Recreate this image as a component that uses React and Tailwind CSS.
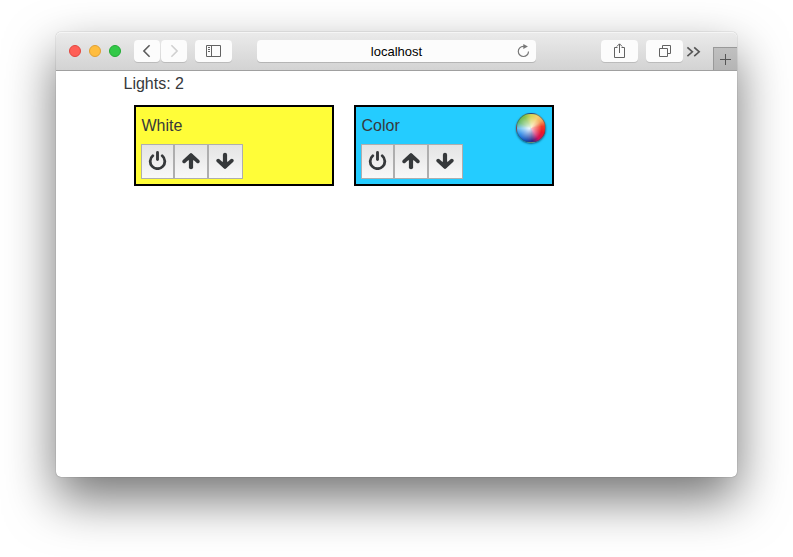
const ICON = '#36393b';

function PowerIcon() {
  return (
    <svg width="19" height="20" viewBox="0 0 19 20" fill="none" stroke={ICON} strokeLinecap="round" className="relative -top-[1.5px] -left-[0.5px] shrink-0">
      <path d="M4.8 5.8A7.3 7.3 0 1 0 14.2 5.8" strokeWidth="2.8" />
      <path d="M9.5 2.4V9.6" strokeWidth="2.9" />
    </svg>
  );
}

function ArrowIcon({ down }) {
  return (
    <svg width="18" height="18" viewBox="0 0 18 18" fill={ICON} stroke={ICON} strokeLinecap="round" strokeLinejoin="round" className={down ? 'relative -top-px -left-px rotate-180' : 'relative -top-px'}>
      <path d="M2.2 9.4L9 3L15.8 9.4" strokeWidth="3.7" fill="none" />
      <path d="M9 2.8L5 7.4H13Z" strokeWidth="1.6" />
      <path d="M9 4V15.2" strokeWidth="4.2" />
    </svg>
  );
}

function ColorWheel() {
  return (
    <div className="relative mt-1.5 mr-1.5 size-[30px] shrink-0 overflow-hidden rounded-full border border-[#2a5560]/60 bg-[conic-gradient(from_0deg,#d4d458,#f4d070_30deg,#f4a860_55deg,#f03c28_82deg,#ec1828_110deg,#d0105c_145deg,#302888_175deg,#1448b0_200deg,#1a80e8_240deg,#58b8ec_268deg,#60b868_295deg,#80c04c_330deg,#d4d458)] shadow-[0_1px_2px_rgba(0,30,60,0.6)]">
      <div className="absolute inset-0 rounded-full bg-[radial-gradient(circle_at_44%_52%,rgba(255,255,255,0.9),rgba(255,255,255,0.5)_24%,rgba(255,255,255,0)_58%)]" />
    </div>
  );
}

function Light({ name, className, picker }) {
  return (
    <section className={`flex h-[81px] w-[200px] justify-between border-2 border-black ${className}`}>
      <div className="pl-[5px]">
        <h2 className="mt-[7px] h-[30px] pl-[0.5px] text-base leading-6">{name}</h2>
        <div className="flex h-[35px]">
          <button className="flex w-[33px] items-center justify-center border border-[#aeaeae] bg-linear-to-b from-[#e4e4e4] to-[#f8f8f8]"><PowerIcon /></button>
          <button className="flex w-[34px] items-center justify-center border border-[#aeaeae] bg-linear-to-b from-[#e4e4e4] to-[#f8f8f8]"><ArrowIcon /></button>
          <button className="flex w-[35px] items-center justify-center border border-[#aeaeae] bg-linear-to-b from-[#e4e4e4] to-[#f8f8f8]"><ArrowIcon down /></button>
        </div>
      </div>
      {picker && <ColorWheel />}
    </section>
  );
}

function ToolButton({ className, children }) {
  return (
    <button className={`flex h-[22px] items-center justify-center rounded bg-[#fcfcfc] shadow-[0_1px_0_rgba(0,0,0,0.13)] ${className}`}>
      {children}
    </button>
  );
}

function Toolbar() {
  return (
    <header className="flex h-[39px] items-start rounded-t-[5px] border-b border-[#a0a0a0] bg-linear-to-b from-[#ebebeb] to-[#d3d3d3] pt-2 pl-[13px] shadow-[inset_0_1px_0_#f5f5f5]">
      <div className="mt-[5px] flex gap-2">
        <i className="size-3 rounded-full border border-[#e2463f] bg-[#ff5f57]" />
        <i className="size-3 rounded-full border border-[#e0a033] bg-[#ffbd3f]" />
        <i className="size-3 rounded-full border border-[#22ab35] bg-[#33c948]" />
      </div>
      <ToolButton className="ml-[13px] w-[26px]">
        <svg width="26" height="22" fill="none" stroke="#5c5c5c" strokeWidth="1.6"><path d="M15.6 5.3L9.9 11L15.6 16.7" /></svg>
      </ToolButton>
      <ToolButton className="ml-px w-[26px]">
        <svg width="26" height="22" fill="none" stroke="#d0d0d0" strokeWidth="1.6"><path d="M10.4 5.3L16.1 11L10.4 16.7" /></svg>
      </ToolButton>
      <ToolButton className="ml-2 w-[37px]">
        <svg width="37" height="22" fill="none" stroke="#626262"><path d="M11.5 5.5H25.5V16.5H11.5ZM16.5 5.5V16.5M13 7.5H15M13 9.5H15M13 11.5H15" /></svg>
      </ToolButton>
      <div className="ml-[25px] flex h-[22px] w-[279px] items-center rounded bg-[#fcfcfc] shadow-[0_1px_0_rgba(0,0,0,0.16)]">
        <span className="flex-1 pt-px pl-[25px] text-center text-[13px] leading-5 text-black">localhost</span>
        <svg width="25" height="22" fill="none" stroke="#777" strokeWidth="1.2"><path d="M13 6.3H12.3A5.1 5.1 0 1 0 17.5 11.4" /><path d="M12.3 3.9L16.9 6.5L12.3 9Z" fill="#777" stroke="none" /></svg>
      </div>
      <ToolButton className="ml-[65px] w-[37px]">
        <svg width="37" height="22" fill="none" stroke="#626262"><path d="M16.5 7.5H13.5V17.5H23.5V7.5H20.5M18.5 4V13M15.8 6.5L18.5 3.8L21.2 6.5" /></svg>
      </ToolButton>
      <ToolButton className="ml-2 w-[37px]">
        <svg width="37" height="22" fill="none" stroke="#626262"><path d="M13.5 8.5H21.5V16.5H13.5ZM16.5 8.5V5.5H24.5V13.5H22" /></svg>
      </ToolButton>
      <svg width="16" height="22" fill="none" stroke="#555" strokeWidth="1.6" className="ml-[3px]"><path d="M1.4 7.4L6.4 11.8L1.4 16.2M8.2 7.4L13.2 11.8L8.2 16.2" /></svg>
      <button className="mt-[7px] ml-auto flex h-[23px] w-6 items-center justify-center border-t border-l border-[#999] bg-linear-to-b from-[#c0c0c0] to-[#b5b5b5]">
        <svg width="23" height="22" fill="none" stroke="#555"><path d="M6 11.5H17M11.5 6V17" /></svg>
      </button>
    </header>
  );
}

export default function App() {
  return (
    <div className="h-[557px] w-[793px] overflow-hidden bg-white pt-8 pl-14 font-['Liberation_Sans',Arial,sans-serif] text-[#36393b]">
      <div className="h-[445px] w-[681px] rounded-[5px] bg-white shadow-[0_0_1px_rgba(0,0,0,0.6),0_22px_50px_rgba(0,0,0,0.55)]">
        <Toolbar />
        <main className="pl-[67px]">
          <h1 className="pl-[0.5px] text-base leading-[26px]">Lights: 2</h1>
          <div className="mt-2 ml-[11px] flex gap-5">
            <Light name="White" className="bg-[#fffd38]" />
            <Light name="Color" className="bg-[#24ccff]" picker />
          </div>
        </main>
      </div>
    </div>
  );
}
